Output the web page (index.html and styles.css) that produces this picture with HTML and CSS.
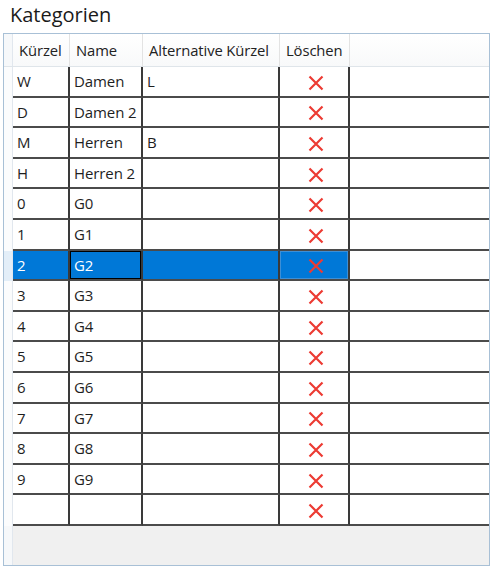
FILE: index.html
```html
<!DOCTYPE html>
<html lang="de">
<head>
<meta charset="utf-8">
<title>Kategorien</title>
<link rel="stylesheet" href="styles.css">
</head>
<body>
<div class="page">
  <div class="title">Kategorien</div>
  <div class="grid">
    <div class="hrow">
      <div class="rh"></div>
      <div class="hc c1">Kürzel</div>
      <div class="hc c2">Name</div>
      <div class="hc c3">Alternative Kürzel</div>
      <div class="hc c4">Löschen</div>
      <div class="hc fill"></div>
    </div>
    <div class="body">
      <div class="row"><div class="rh"></div><div class="c c1">W</div><div class="c c2">Damen</div><div class="c c3">L</div><div class="c c4"><svg class="x" viewBox="0 0 16 16"><path d="M1.5 1.5 L14.5 14.5 M14.5 1.5 L1.5 14.5"/></svg></div><div class="c fill"></div></div>
      <div class="row"><div class="rh"></div><div class="c c1">D</div><div class="c c2">Damen 2</div><div class="c c3"></div><div class="c c4"><svg class="x" viewBox="0 0 16 16"><path d="M1.5 1.5 L14.5 14.5 M14.5 1.5 L1.5 14.5"/></svg></div><div class="c fill"></div></div>
      <div class="row"><div class="rh"></div><div class="c c1">M</div><div class="c c2">Herren</div><div class="c c3">B</div><div class="c c4"><svg class="x" viewBox="0 0 16 16"><path d="M1.5 1.5 L14.5 14.5 M14.5 1.5 L1.5 14.5"/></svg></div><div class="c fill"></div></div>
      <div class="row"><div class="rh"></div><div class="c c1">H</div><div class="c c2">Herren 2</div><div class="c c3"></div><div class="c c4"><svg class="x" viewBox="0 0 16 16"><path d="M1.5 1.5 L14.5 14.5 M14.5 1.5 L1.5 14.5"/></svg></div><div class="c fill"></div></div>
      <div class="row"><div class="rh"></div><div class="c c1">0</div><div class="c c2">G0</div><div class="c c3"></div><div class="c c4"><svg class="x" viewBox="0 0 16 16"><path d="M1.5 1.5 L14.5 14.5 M14.5 1.5 L1.5 14.5"/></svg></div><div class="c fill"></div></div>
      <div class="row"><div class="rh"></div><div class="c c1">1</div><div class="c c2">G1</div><div class="c c3"></div><div class="c c4"><svg class="x" viewBox="0 0 16 16"><path d="M1.5 1.5 L14.5 14.5 M14.5 1.5 L1.5 14.5"/></svg></div><div class="c fill"></div></div>
      <div class="row sel"><div class="rh"></div><div class="c c1">2</div><div class="c c2 focus">G2</div><div class="c c3"></div><div class="c c4"><svg class="x" viewBox="0 0 16 16"><path d="M1.5 1.5 L14.5 14.5 M14.5 1.5 L1.5 14.5"/></svg></div><div class="c fill"></div></div>
      <div class="row"><div class="rh"></div><div class="c c1">3</div><div class="c c2">G3</div><div class="c c3"></div><div class="c c4"><svg class="x" viewBox="0 0 16 16"><path d="M1.5 1.5 L14.5 14.5 M14.5 1.5 L1.5 14.5"/></svg></div><div class="c fill"></div></div>
      <div class="row"><div class="rh"></div><div class="c c1">4</div><div class="c c2">G4</div><div class="c c3"></div><div class="c c4"><svg class="x" viewBox="0 0 16 16"><path d="M1.5 1.5 L14.5 14.5 M14.5 1.5 L1.5 14.5"/></svg></div><div class="c fill"></div></div>
      <div class="row"><div class="rh"></div><div class="c c1">5</div><div class="c c2">G5</div><div class="c c3"></div><div class="c c4"><svg class="x" viewBox="0 0 16 16"><path d="M1.5 1.5 L14.5 14.5 M14.5 1.5 L1.5 14.5"/></svg></div><div class="c fill"></div></div>
      <div class="row"><div class="rh"></div><div class="c c1">6</div><div class="c c2">G6</div><div class="c c3"></div><div class="c c4"><svg class="x" viewBox="0 0 16 16"><path d="M1.5 1.5 L14.5 14.5 M14.5 1.5 L1.5 14.5"/></svg></div><div class="c fill"></div></div>
      <div class="row"><div class="rh"></div><div class="c c1">7</div><div class="c c2">G7</div><div class="c c3"></div><div class="c c4"><svg class="x" viewBox="0 0 16 16"><path d="M1.5 1.5 L14.5 14.5 M14.5 1.5 L1.5 14.5"/></svg></div><div class="c fill"></div></div>
      <div class="row"><div class="rh"></div><div class="c c1">8</div><div class="c c2">G8</div><div class="c c3"></div><div class="c c4"><svg class="x" viewBox="0 0 16 16"><path d="M1.5 1.5 L14.5 14.5 M14.5 1.5 L1.5 14.5"/></svg></div><div class="c fill"></div></div>
      <div class="row"><div class="rh"></div><div class="c c1">9</div><div class="c c2">G9</div><div class="c c3"></div><div class="c c4"><svg class="x" viewBox="0 0 16 16"><path d="M1.5 1.5 L14.5 14.5 M14.5 1.5 L1.5 14.5"/></svg></div><div class="c fill"></div></div>
      <div class="row"><div class="rh"></div><div class="c c1"></div><div class="c c2"></div><div class="c c3"></div><div class="c c4"><svg class="x" viewBox="0 0 16 16"><path d="M1.5 1.5 L14.5 14.5 M14.5 1.5 L1.5 14.5"/></svg></div><div class="c fill"></div></div>
      <div class="rest"><div class="rh"></div><div class="empty"></div></div>
    </div>
  </div>
</div>
</body>
</html>
```

FILE: styles.css
```css
html, body {
  margin: 0;
  padding: 0;
  background: #ffffff;
}

.page {
  width: 492px;
  height: 570px;
  font-family: "Open Sans", "Noto Sans", "DejaVu Sans", sans-serif;
  color: #1e1e1e;
  display: flex;
  flex-direction: column;
}

.title {
  font-size: 20px;
  line-height: 26px;
  height: 33px;
  padding-left: 10px;
  padding-top: 2px;
  box-sizing: border-box;
  color: #1a1a1a;
}

.grid {
  margin-left: 3px;
  width: 487px;
  height: 533px;
  box-sizing: border-box;
  border: 1px solid #a8c0d6;
  background: #f0f0f0;
  display: flex;
  flex-direction: column;
  overflow: hidden;
}

.hrow {
  display: flex;
  height: 33px;
  flex: none;
  background: linear-gradient(#ffffff, #f8f9fa);
  border-bottom: 1px solid #dfe5ea;
  box-sizing: border-box;
}

.rh {
  width: 8px;
  flex: none;
  background: #f6f8fa;
  border-right: 1px solid #e1e7ee;
}

.hc {
  font-size: 14.8px;
  line-height: 32px;
  padding-left: 6px;
  box-sizing: border-box;
  border-right: 1px solid #e3e3e3;
  color: #222;
  white-space: nowrap;
  overflow: hidden;
  letter-spacing: -0.1px;
}

.hc.fill {
  border-right: none;
  flex: 1;
}

.c1 { width: 57px; flex: none; }
.c2 { width: 73px; flex: none; }
.c3 { width: 137px; flex: none; }
.c4 { width: 70px; flex: none; }
.fill { flex: 1; }

.hc.c4 { padding-left: 6px; }

.body {
  flex: 1;
  display: flex;
  flex-direction: column;
}

.row {
  display: flex;
  height: 30.6px;
  flex: none;
}

.c {
  box-sizing: border-box;
  background: #ffffff;
  border-bottom: 2px solid #4b4b4b;
  border-right: 2px solid #3a3a3a;
  font-size: 15px;
  line-height: 28px;
  padding-left: 4px;
  color: #1e1e1e;
  white-space: nowrap;
  letter-spacing: -0.1px;
}

.c.fill {
  border-right: none;
}

.c.c4 {
  display: flex;
  justify-content: center;
  align-items: center;
  padding: 3px 0 0 0;
}

.x {
  width: 16px;
  height: 16px;
  margin-left: 3px;
}

.x path {
  stroke: #ec3b33;
  stroke-width: 2.2;
  fill: none;
}

.row .rh {
  background: #fbfcfd;
}

.sel .c {
  background: #0078d7;
  color: #ffffff;
}

.sel .c.fill {
  background: #ffffff;
}

.sel .c.c4 {
  box-shadow: inset 0 0 0 1px #3d8fd6;
}

.sel .c.focus {
  box-shadow: inset 0 0 0 1px #000000;
}

.sel .rh {
  background: #e3eef8;
}

.rest {
  flex: 1;
  display: flex;
}

.rest .rh {
  background: #f6f8fa;
}

.empty {
  flex: 1;
  background: #f0f0f0;
}
```
